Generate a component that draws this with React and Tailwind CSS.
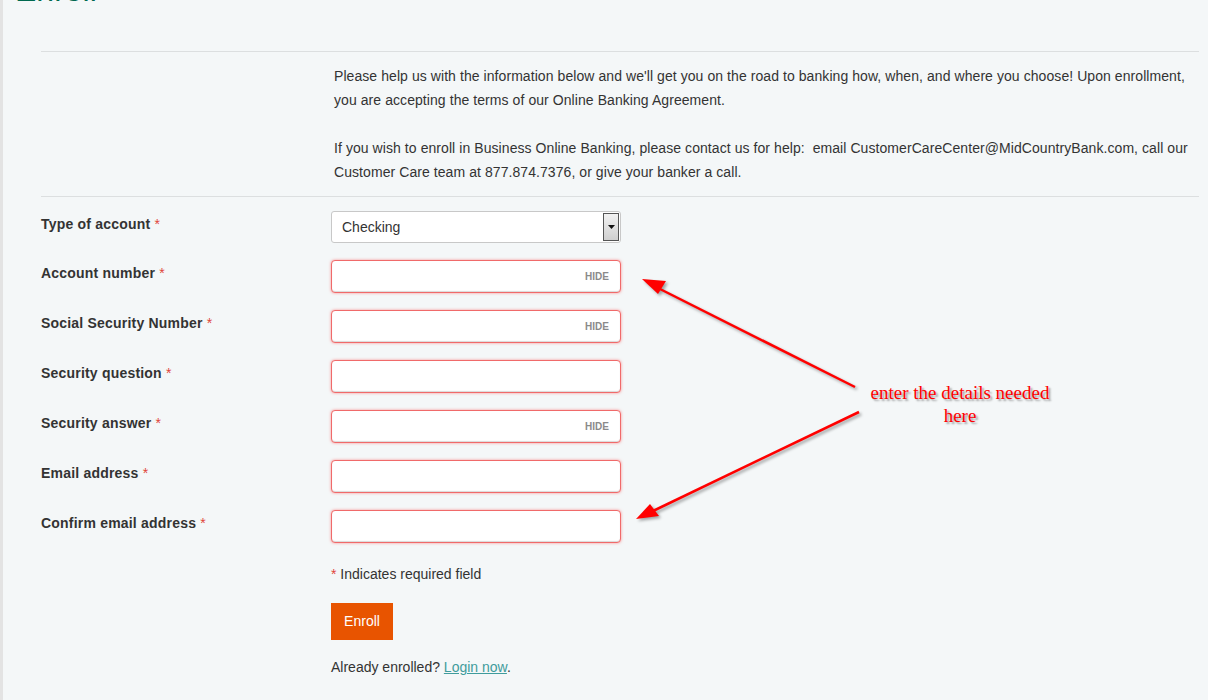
import React from 'react';

const fields = [
    { label: 'Account number', hide: true },
    { label: 'Social Security Number', hide: true },
    { label: 'Security question', hide: false },
    { label: 'Security answer', hide: true },
    { label: 'Email address', hide: false },
    { label: 'Confirm email address', hide: false },
];

function Label({ children }) {
    return (
        <div className="w-[290px] shrink-0 pt-[3px] text-[14px] font-bold leading-[20px] tracking-[0.2px] text-[#333]">
            {children} <span className="font-normal text-[#e0453a]">*</span>
        </div>
    );
}

function Annotation() {
    return (
        <div className="pointer-events-none absolute left-0 top-0 h-[700px] w-[1208px]">
            <svg width="1208" height="700" className="absolute left-0 top-0" style={{ filter: 'drop-shadow(2px 2px 1.5px rgba(0,0,0,0.35))' }}>
                <line x1="852" y1="387" x2="655" y2="288" stroke="#ff0000" strokeWidth="2.5" />
                <polygon points="639,279 663,281 655,294" fill="#ff0000" />
                <line x1="856" y1="412" x2="650" y2="511" stroke="#ff0000" strokeWidth="2.5" />
                <polygon points="633,519 647,504 656,516" fill="#ff0000" />
            </svg>
            <div
                className="absolute left-[847px] top-[381px] w-[220px] text-center text-[19px] leading-[23px] text-[#ff0000]"
                style={{ fontFamily: '"Liberation Serif", "Times New Roman", serif', textShadow: '2px 2px 2px rgba(0,0,0,0.35)' }}
            >
                enter the details needed
                <br />
                here
            </div>
        </div>
    );
}

export default function App() {
    return (
        <div
            className="relative h-[700px] overflow-hidden border-l-[3px] border-[#e3e3e3] bg-[#f4f7f8] text-[#333]"
            style={{ fontFamily: '"Liberation Sans", Arial, sans-serif' }}
        >
            <h1 className="-mt-[26px] ml-[12px] text-[32px] leading-[32px] text-[#00694f]">Enroll</h1>

            <div className="ml-[38px] mt-[45px] w-[1158px]">
                <div className="border-t border-[#dcdfe0] pb-[12px] pl-[293px] pr-[10px] pt-[12px] text-[14px] leading-[24px] tracking-[0.07px]">
                    <p>
                        Please help us with the information below and we'll get you on the road to banking how, when, and where you choose! Upon enrollment, you are accepting the terms of our Online Banking Agreement.
                    </p>
                    <p className="mt-[24px]">
                        If you wish to enroll in Business Online Banking, please contact us for help:&nbsp; email CustomerCareCenter@MidCountryBank.com, call our Customer Care team at 877.874.7376, or give your banker a call.
                    </p>
                </div>

                <div className="border-t border-[#dcdfe0] pt-[14px]">
                    <div className="flex h-[49px]">
                        <Label>Type of account</Label>
                        <div className="flex h-[32px] w-[290px] items-center justify-between rounded-[3px] border border-[#c8c8c8] bg-white pl-[10px] pr-[1px] text-[14px]">
                            <span>Checking</span>
                            <div className="flex h-[28px] w-[16px] items-center justify-center border border-[#555] bg-gradient-to-b from-[#f2f2f2] to-[#cfcfcf]">
                                <svg width="7" height="4" viewBox="0 0 7 4"><polygon points="0,0 7,0 3.5,4" fill="#111" /></svg>
                            </div>
                        </div>
                    </div>

                    {fields.map((f) => (
                        <div key={f.label} className="flex h-[50px]">
                            <Label>{f.label}</Label>
                            <div className="flex h-[33px] w-[290px] items-center justify-end rounded-[4px] border border-[#f06a6a] bg-white pr-[11px] shadow-[0_0_3px_rgba(255,60,60,0.55),inset_0_-1px_1px_rgba(0,0,0,0.15)]">
                                {f.hide && <span className="text-[10px] font-bold text-[#8a8a8a]">HIDE</span>}
                            </div>
                        </div>
                    ))}

                    <div className="pl-[290px]">
                        <div className="mt-[4px] text-[14px] leading-[20px]">
                            <span className="text-[#e0453a]">*</span> Indicates required field
                        </div>
                        <button className="mt-[19px] h-[37px] w-[62px] bg-[#e85400] text-[14px] text-white">Enroll</button>
                        <div className="mt-[17px] text-[14px] leading-[20px]">
                            Already enrolled? <a href="#" className="text-[#3f9c9c] underline">Login now</a>.
                        </div>
                    </div>
                </div>
            </div>

            <Annotation />
        </div>
    );
}
